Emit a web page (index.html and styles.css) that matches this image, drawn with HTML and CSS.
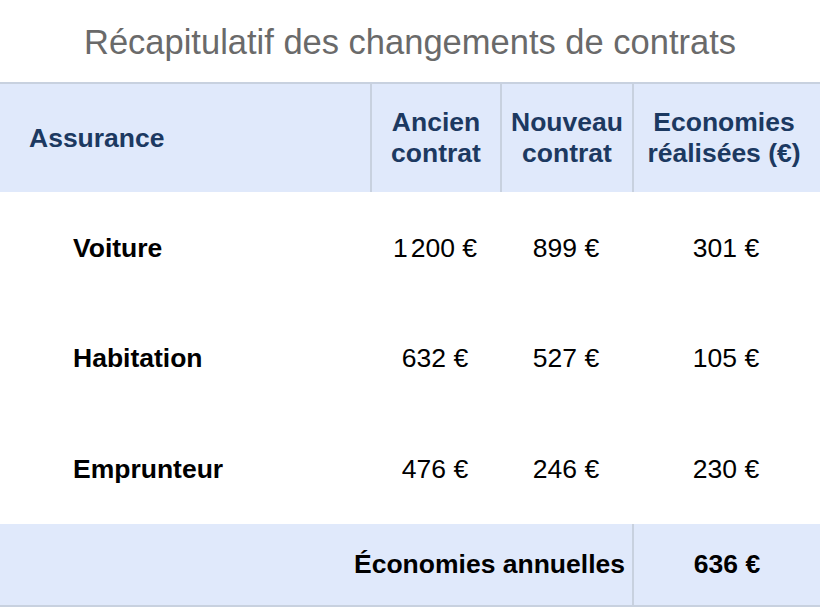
FILE: index.html
```html
<!DOCTYPE html>
<html lang="fr">
<head>
<meta charset="utf-8">
<title>Récapitulatif</title>
<link rel="stylesheet" href="styles.css">
</head>
<body>
<h1 class="title">Récapitulatif des changements de contrats</h1>
<table class="recap">
  <thead>
    <tr>
      <th class="c-name">Assurance</th>
      <th class="c-old">Ancien<br>contrat</th>
      <th class="c-new">Nouveau<br>contrat</th>
      <th class="c-save">Economies<br>réalisées (€)</th>
    </tr>
  </thead>
  <tbody>
    <tr>
      <td class="name">Voiture</td>
      <td class="num">1<span class="gap"></span>200 €</td>
      <td class="num">899 €</td>
      <td class="num">301 €</td>
    </tr>
    <tr>
      <td class="name">Habitation</td>
      <td class="num">632 €</td>
      <td class="num">527 €</td>
      <td class="num">105 €</td>
    </tr>
    <tr class="last">
      <td class="name">Emprunteur</td>
      <td class="num">476 €</td>
      <td class="num">246 €</td>
      <td class="num">230 €</td>
    </tr>
  </tbody>
  <tfoot>
    <tr>
      <td class="total-label" colspan="3">Économies annuelles</td>
      <td class="total-value">636 €</td>
    </tr>
  </tfoot>
</table>
</body>
</html>
```

FILE: styles.css
```css
html, body {
  margin: 0;
  padding: 0;
  background: #ffffff;
}

body {
  font-family: "Liberation Sans", Arial, Helvetica, sans-serif;
  width: 820px;
}

.title {
  margin: 0;
  height: 82px;
  line-height: 84px;
  font-size: 34.5px;
  font-weight: normal;
  color: #6a6a6a;
  text-align: center;
}

.recap {
  width: 820px;
  border-collapse: separate;
  border-spacing: 0;
  table-layout: fixed;
  font-size: 26.5px;
}

.recap th {
  box-sizing: border-box;
  height: 110px;
  background: #e0e9fb;
  background-clip: padding-box;
  color: #1c3961;
  font-weight: bold;
  line-height: 31px;
  text-align: center;
  vertical-align: middle;
  border-top: 2px solid #c8d1df;
  padding: 0;
}

.recap th + th {
  border-left: 2px solid #c8d1df;
}

.recap th.c-name {
  width: 370px;
  text-align: left;
  padding-left: 29px;
}

.recap th.c-old { width: 130px; }
.recap th.c-new { width: 132px; }
.recap th.c-save { width: 188px; padding-right: 6px; }

.recap td {
  box-sizing: border-box;
  padding: 0;
  vertical-align: middle;
  color: #000000;
}

.recap tbody td {
  height: 110px;
  padding-top: 3px;
}

.recap tbody tr.last td {
  height: 112px;
}

.recap td.name {
  font-weight: bold;
  padding-left: 73px;
}

.recap td.num {
  text-align: center;
}

.gap {
  display: inline-block;
  width: 3px;
}

.recap tfoot td {
  height: 83px;
  background: #e0e9fb;
  background-clip: padding-box;
  border-bottom: 2px solid #c8d1df;
  font-weight: bold;
}

.recap td.total-label {
  text-align: right;
  padding-right: 7px;
}

.recap td.total-value {
  text-align: center;
  border-left: 2px solid #c8d1df;
}
```
